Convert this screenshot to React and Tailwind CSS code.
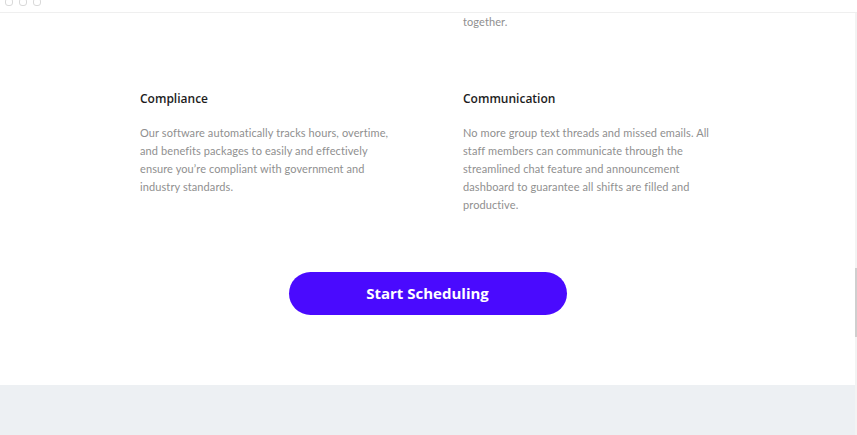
import React from "react";

const features = [
  {
    title: "Compliance",
    text: "Our software automatically tracks hours, overtime, and benefits packages to easily and effectively ensure you’re compliant with government and industry standards.",
  },
  {
    title: "Communication",
    text: "No more group text threads and missed emails. All staff members can communicate through the streamlined chat feature and announcement dashboard to guarantee all shifts are filled and productive.",
  },
];

const FeatureBlock = ({ title, text }) => (
  <div className="w-[262px]">
    <h3 className="text-[12px] leading-[18px] font-semibold text-[#1c1c1c] font-['Open_Sans',sans-serif]">
      {title}
    </h3>
    <p className="mt-[16px] text-[11px] leading-[18px] text-[#8f8f8f] font-['Lato',sans-serif] tracking-[0.1px]">
      {text}
    </p>
  </div>
);

export default function App() {
  return (
    <div className="w-[857px] h-[435px] overflow-hidden bg-white flex flex-col">
      {/* window bar */}
      <div className="h-[13px] border-b border-[#efefef] flex items-start gap-[6px] pl-[5px] shrink-0">
        <span className="w-[8px] h-[8px] -mt-[2px] rounded-[3px] border border-[#d9d9d9]" />
        <span className="w-[8px] h-[8px] -mt-[2px] rounded-[3px] border border-[#d9d9d9]" />
        <span className="w-[8px] h-[8px] -mt-[2px] rounded-[3px] border border-[#d9d9d9]" />
      </div>

      <div className="flex flex-1 min-h-0">
        <div className="flex-1 flex flex-col">
          <section className="bg-white h-[372px] shrink-0 flex flex-col">
            <div className="grid grid-cols-[323px_1fr] pl-[140px]">
              <div />
              <p className="text-[11px] leading-[18px] text-[#8f8f8f] font-['Lato',sans-serif] tracking-[0.1px]">
                together.
              </p>
            </div>

            <div className="grid grid-cols-[323px_1fr] pl-[140px] mt-[59px]">
              {features.map((f) => (
                <FeatureBlock key={f.title} {...f} />
              ))}
            </div>

            <div className="flex justify-center mt-[58px]">
              <button className="w-[278px] h-[43px] rounded-full bg-[#4a0afe] text-white text-[15px] font-bold font-['Open_Sans',sans-serif]">
                Start Scheduling
              </button>
            </div>
          </section>
          <section className="flex-1 bg-[#edf0f3]" />
        </div>

        {/* scrollbar */}
        <div className="w-[2px] bg-[#f3f3f3] pt-[255px]">
          <div className="h-[69px] bg-[#cfcfcf]" />
        </div>
      </div>
    </div>
  );
}
